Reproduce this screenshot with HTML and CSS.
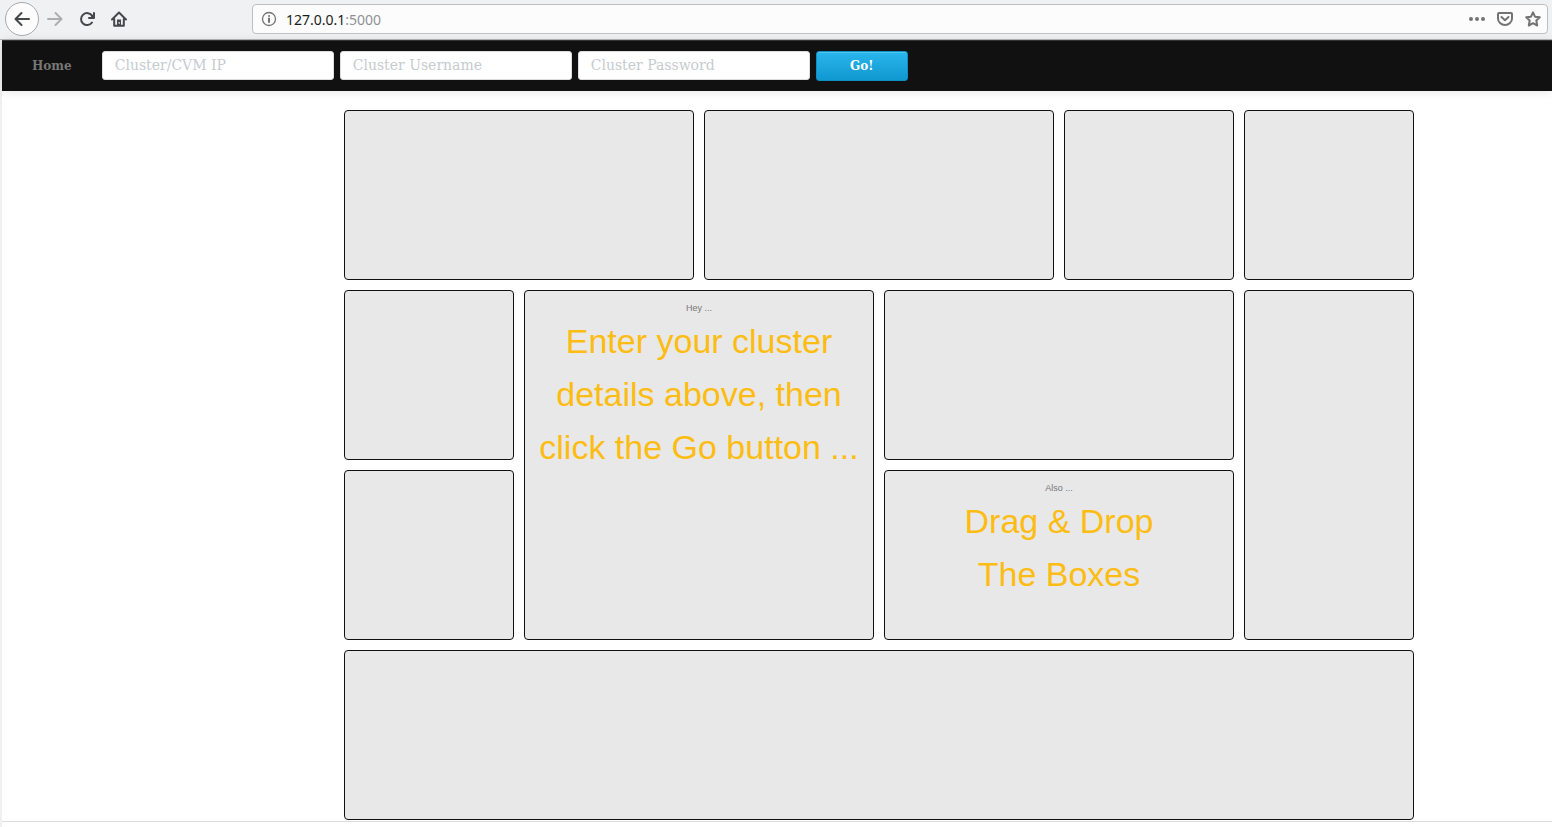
FILE: index.html
```html
<!DOCTYPE html>
<html lang="en">
<head>
<meta charset="utf-8">
<meta name="viewport" content="width=device-width, initial-scale=1">
<title>Cluster Dashboard</title>
<link rel="stylesheet" href="styles.css">
</head>
<body>
<div class="toolbar">
  <div class="tools">
    <button class="tool tool-back" type="button" aria-label="Back"><svg viewBox="0 0 16 16"><path d="M15 8H1.500M7.500 2L1.500 8l6 6"/></svg></button>
    <button class="tool tool-off" type="button" aria-label="Forward" disabled><svg viewBox="0 0 16 16"><path d="M1 8h13.500M8.500 2l6 6-6 6"/></svg></button>
    <button class="tool" type="button" aria-label="Reload"><svg viewBox="0 0 16 16"><path d="M13 11.500A6 6 0 1 1 13.200 5"/><path d="M15 2v5H10"/><path class="solid" d="M15 2v5h-4z"/></svg></button>
    <button class="tool" type="button" aria-label="Home page"><svg viewBox="0 0 16 16"><path d="M1 8.500L8 1.500l7 7M3.200 8v6.800h9.600V8"/><path class="solid" fill-rule="evenodd" d="M6 8.500h4v6.300H6zM7.600 11v1.800h1.200V11z"/></svg></button>
  </div>
  <div class="address">
    <svg class="info" viewBox="0 0 16 16" aria-hidden="true"><circle cx="8" cy="8" r="6.500"/><path class="info-mark" d="M8 7.600v3.400M8 4.900v.1"/></svg>
    <a class="url" href="#">127.0.0.1<span class="port">:5000</span></a>
    <button class="action" type="button" aria-label="Page actions"><svg viewBox="0 0 16 16"><g class="solid"><circle cx="2" cy="8" r="2"/><circle cx="8" cy="8" r="2"/><circle cx="14" cy="8" r="2"/></g></svg></button>
    <button class="action" type="button" aria-label="Save to Pocket"><svg viewBox="0 0 16 16"><path d="M2 2h12q1 0 1 1v4.500a7 6.500 0 0 1-14 0V3q0-1 1-1zM4.500 6L8 9.200 11.500 6"/></svg></button>
    <button class="action" type="button" aria-label="Bookmark"><svg viewBox="0 0 16 16"><path d="M8 1.300l2 4.400 4.800.5-3.500 3.300.9 5L8 12.200l-4.200 2.300.9-5L1.200 6.200 6 5.700z"/></svg></button>
  </div>
</div>
<div class="page">
  <nav class="navbar">
    <a class="home" href="#">Home</a>
    <form class="login">
      <input class="field" type="text" placeholder="Cluster/CVM IP" aria-label="Cluster/CVM IP">
      <input class="field" type="text" placeholder="Cluster Username" aria-label="Cluster Username">
      <input class="field" type="password" placeholder="Cluster Password" aria-label="Cluster Password">
      <button class="go" type="button">Go!</button>
    </form>
  </nav>
  <main class="main">
    <ul class="grid">
      <li class="box wide"></li>
      <li class="box wide"></li>
      <li class="box"></li>
      <li class="box"></li>
      <li class="box"></li>
      <li class="box wide tall"><p class="note">Hey ...</p><p class="message">Enter your cluster details above, then click the Go button ...</p></li>
      <li class="box wide"></li>
      <li class="box tall"></li>
      <li class="box"></li>
      <li class="box wide"><p class="note">Also ...</p><p class="message">Drag &amp; Drop<br>The Boxes</p></li>
      <li class="box full"></li>
    </ul>
  </main>
  <footer class="footer"></footer>
</div>
</body>
</html>
```
FILE: styles.css
```css
* {
  box-sizing: border-box;
}

body {
  margin: 0;
  background: #fff;
  font-family: "Liberation Sans", Arial, sans-serif;
}

.toolbar {
  display: flex;
  align-items: center;
  gap: 117px;
  height: 40px;
  padding: 0 4px 2px 5px;
  background: #f0f1f3;
  border-bottom: 1px solid #b5b5b5;
}

.tools {
  display: flex;
  align-items: center;
}

.tool,
.action {
  display: flex;
  align-items: center;
  justify-content: center;
  padding: 0;
  border: 0;
  background: none;
  color: #46474a;
}

.tool {
  width: 32px;
  height: 32px;
}

.tool-back {
  width: 34px;
  height: 34px;
  border: 1px solid #a9a9aa;
  border-radius: 50%;
  background: #fcfcfc;
}

.tool-off {
  color: #adaeb0;
}

svg {
  display: block;
  width: 16px;
  height: 16px;
  fill: none;
  stroke: currentColor;
  stroke-width: 2;
  stroke-linecap: round;
  stroke-linejoin: round;
}

.solid {
  fill: currentColor;
  stroke: none;
}

.address {
  display: flex;
  flex: 1;
  align-items: center;
  gap: 12px;
  height: 30px;
  padding: 0 6px 0 8px;
  border: 1px solid #bebfc1;
  border-radius: 4px;
  background: #fcfcfc;
  color: #737375;
}

.info {
  stroke-width: 1.300;
}

.info-mark {
  stroke-width: 2;
}

.url {
  flex: 1;
  margin-left: -3px;
  padding-top: 2px;
  color: #1b1c22;
  font: 13px/20px "Noto Sans", sans-serif;
  font-size: 14px;
  text-decoration: none;
}

.port {
  color: #909196;
}

.action {
  width: 16px;
  height: 16px;
  color: #737375;
}

.page {
  border-left: 2px solid #f0f0f0;
}

.navbar {
  display: flex;
  align-items: center;
  gap: 30px;
  min-height: 51px;
  padding: 0 30px;
  background: #111;
  border-top: 1px solid #333;
  box-shadow: 0 1px 10px rgba(0, 0, 0, 0.1);
  font-family: "DejaVu Serif", serif;
}

.home {
  color: #777;
  font-size: 12px;
  font-weight: bold;
  line-height: 20px;
  text-decoration: none;
}

.login {
  display: flex;
  gap: 6px;
}

.field {
  width: 232px;
  height: 29px;
  padding: 0 12px 2px;
  border: 1px solid #ddd;
  border-radius: 3px;
  background: #fff;
  color: #555;
  font: 14px/20px "DejaVu Serif", serif;
}

.field::placeholder {
  color: #c6cbcf;
  opacity: 1;
}

.go {
  width: 92px;
  height: 30px;
  padding: 0;
  border: 1px solid #0f8ec4;
  border-radius: 3px;
  background: linear-gradient(#29b6ed, #1098d0);
  box-shadow: inset 0 1px 0 rgba(255, 255, 255, 0.2);
  color: #fff;
  font: bold 12px/20px "DejaVu Serif", serif;
}

.main {
  padding: 19px 0 1px 204px;
}

.grid {
  display: grid;
  grid-template-columns: repeat(6, 1fr);
  grid-auto-rows: minmax(170px, auto);
  gap: 10px;
  max-width: 1070px;
  margin: 0 auto;
  padding: 0;
  list-style: none;
}

.box {
  padding: 10px;
  border: 1px solid #111;
  border-radius: 4px;
  background: #e8e8e8;
  text-align: center;
}

.wide {
  grid-column: span 2;
}

.tall {
  grid-row: span 2;
}

.full {
  grid-column: 1 / -1;
}

.note {
  margin: 0;
  color: #777;
  font-size: 9px;
  line-height: 14px;
}

.message {
  margin: 0;
  color: #fdbc11;
  font-size: 34px;
  line-height: 53px;
}

.footer {
  height: 6px;
  border-top: 1px solid #ddd;
}
```
